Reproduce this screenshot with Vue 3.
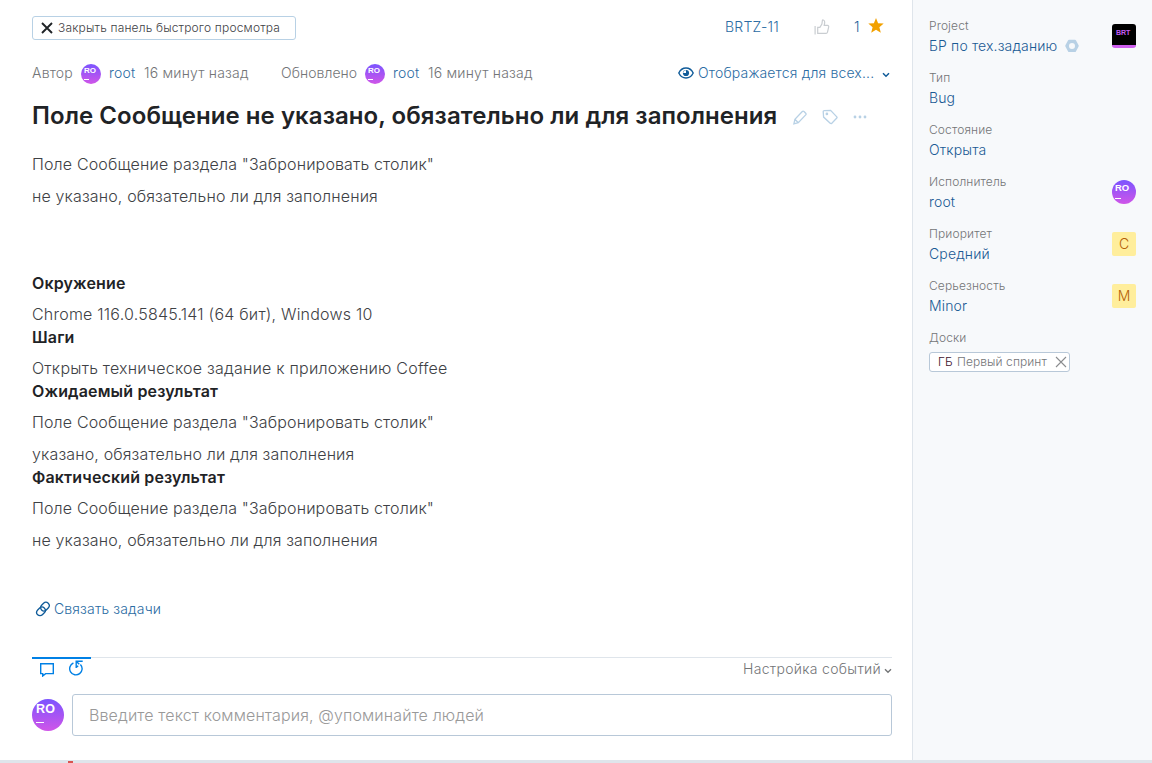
<script setup>
const sections = [
  { title: 'Окружение', wide: true, lines: ['Chrome 116.0.5845.141 (64 бит), Windows 10'] },
  { title: 'Шаги', wide: true, lines: ['Открыть техническое задание к приложению Coffee'] },
  { title: 'Ожидаемый результат', lines: ['Поле Сообщение раздела "Забронировать столик"', 'указано, обязательно ли для заполнения'] },
  { title: 'Фактический результат', lines: ['Поле Сообщение раздела "Забронировать столик"', 'не указано, обязательно ли для заполнения'] },
]
const fields = [
  { label: 'Project', value: 'БР по тех.заданию', kind: 'project' },
  { label: 'Тип', value: 'Bug' },
  { label: 'Состояние', value: 'Открыта' },
  { label: 'Исполнитель', value: 'root', kind: 'user' },
  { label: 'Приоритет', value: 'Средний', kind: 'tag', tag: 'C' },
  { label: 'Серьезность', value: 'Minor', kind: 'tag', tag: 'M' },
]
</script>

<template>
  <div class="page">
    <div class="sheet">
      <main class="main">
        <div class="toolbar">
          <button class="close">
            <svg width="12" height="12" viewBox="0 0 12 12"><path d="M1 1l10 10M11 1L1 11" stroke="#1f2326" stroke-width="1.9" fill="none" /></svg>
            <span>Закрыть панель быстрого просмотра</span>
          </button>
          <span class="issue-id">BRTZ-11</span>
          <svg class="thumb" width="16" height="16" viewBox="0 0 16 16" fill="none" stroke="#c9cdd1" stroke-width="1.2"><path d="M1.1 7v8.500M3.700 8.300h2.200l2-3.200.5-3.700q.2-.6.900-.4 1.700.5 1.400 2.600l-.5 2.700h3.300q1.400.2 1.200 1.500l-1.200 5.300q-.4 1.200-1.500 1.300H3.700z" /></svg>
          <span class="votes">1</span>
          <svg class="star" width="16" height="15" viewBox="0 0 16 15"><path d="M8 0l2.1 5.2 5.6.4-4.3 3.6 1.4 5.5L8 11.7l-4.8 3 1.4-5.5L.3 5.6l5.6-.4z" fill="#f2a100" /></svg>
        </div>

        <div class="meta">
          <span class="author">Автор</span>
          <span class="avatar a20"><b>RO</b><i></i></span>
          <span class="link user">root</span>
          <span class="ago">16 минут назад</span>
          <span class="updated">Обновлено</span>
          <span class="avatar a20"><b>RO</b><i></i></span>
          <span class="link user">root</span>
          <span class="ago">16 минут назад</span>
          <span class="visibility link">
            <svg width="16" height="12" viewBox="0 0 16 12"><path d="M.8 6C2.4 2.7 4.9 1 8 1s5.600 1.700 7.200 5C13.600 9.300 11.100 11 8 11S2.400 9.300.8 6z" fill="none" stroke="#0f5b99" stroke-width="1.400" /><circle cx="8" cy="6" r="3.100" fill="#0f5b99" /><path d="M8 3.200V6H5.200A2.900 2.900 0 0 1 8 3.200z" fill="#fff" /></svg>
            <span class="vis-text">Отображается для всех...</span>
            <svg class="chevron" width="8" height="6" viewBox="0 0 8 6"><path d="M1 1.200l3 3 3-3" stroke="#0f5b99" stroke-width="1.500" fill="none" /></svg>
          </span>
        </div>

        <div class="heading">
          <h1>Поле Сообщение не указано, обязательно ли для заполнения</h1>
          <svg class="pencil" width="14" height="15" viewBox="0 0 14 15" fill="none" stroke="#b8d1e5" stroke-width="1.300"><path d="M.9 13.900l1-4.600 7.400-7.800q.8-.8 1.700 0l1.700 1.700q.8.8 0 1.700l-7.400 7.800zM1.900 9.300l3.400 3.400" /></svg>
          <svg class="label-icon" width="16" height="16" viewBox="0 0 16 16" fill="none" stroke="#b8d1e5" stroke-width="1.300"><path d="M1.200 2.500q0-.9.900-.9L8.600 1.400l6.200 6.500q.5.600 0 1.100l-5.200 5.400q-.6.500-1.100 0L1.600 8.100z" /><circle cx="4.900" cy="4.900" r=".7" /></svg>
          <svg class="more" width="14" height="4" viewBox="0 0 14 4" fill="#b8d1e5"><circle cx="2" cy="2" r="1.400" /><circle cx="7" cy="2" r="1.400" /><circle cx="12" cy="2" r="1.400" /></svg>
        </div>

        <article class="body">
          <p>Поле Сообщение раздела "Забронировать столик"</p>
          <p>не указано, обязательно ли для заполнения</p>
          <div class="steps">
            <section v-for="s in sections" :key="s.title" :class="{ wide: s.wide }">
              <h2>{{ s.title }}</h2>
              <p v-for="l in s.lines" :key="l">{{ l }}</p>
            </section>
          </div>
        </article>

        <div class="relate link">
          <svg width="16" height="16" viewBox="0 0 16 16" fill="none" stroke="#0f5b99" stroke-width="1.300"><rect x="5.200" y="2.300" width="9.400" height="6.600" rx="3.300" transform="rotate(-45 9.900 5.600)" /><rect x="1.300" y="7.100" width="9.400" height="6.600" rx="3.300" transform="rotate(-45 6 10.400)" /></svg>
          <span>Связать задачи</span>
        </div>

        <div class="activity">
          <div class="tabs">
            <svg width="14" height="14" viewBox="0 0 14 14" fill="none" stroke="#0080e5" stroke-width="1.400"><path d="M.7.700h12.600v9.900H5.600L2.700 13v-2.400H.7z" /></svg>
            <svg width="14" height="16" viewBox="0 0 14 16" fill="none" stroke="#0080e5" stroke-width="1.400"><path d="M11.400 4.400A6.200 6.200 0 1 1 4.400 3M7.200 8V1.200h6.500M7.400 1.400l2.900 2.900M7.200 7.400l2-1.700" /></svg>
          </div>
          <div class="events">
            <span>Настройка событий</span>
            <svg class="chevron" width="8" height="6" viewBox="0 0 8 6"><path d="M1 1.200l3 3 3-3" stroke="#737577" stroke-width="1.400" fill="none" /></svg>
          </div>
        </div>

        <div class="comment">
          <span class="avatar a32"><b>RO</b><i></i></span>
          <div class="input">Введите текст комментария, @упоминайте людей</div>
        </div>
      </main>

      <aside class="side">
        <div v-for="f in fields" :key="f.label" class="field">
          <div>
            <div class="label">{{ f.label }}</div>
            <div class="value">
              <span>{{ f.value }}</span>
              <svg v-if="f.kind === 'project'" width="14" height="14" viewBox="0 0 14 14"><path fill-rule="evenodd" d="M4 .8h6q.6 0 .9.500l2.700 5q.3.600 0 1.200l-2.700 5q-.3.600-.9.600H4q-.6 0-.9-.6l-2.700-5q-.3-.6 0-1.200l2.700-5q.3-.5.9-.5zM7 4a3 3 0 1 0 0 6 3 3 0 0 0 0-6z" fill="#b8d1e5" /></svg>
            </div>
          </div>
          <span v-if="f.kind === 'project'" class="project-icon"><b>BRT</b></span>
          <span v-if="f.kind === 'user'" class="avatar a24"><b>RO</b><i></i></span>
          <span v-if="f.kind === 'tag'" class="color-tag">{{ f.tag }}</span>
        </div>
        <div class="label boards">Доски</div>
        <div class="board">
          <span class="code">ГБ</span>
          <span class="sprint">Первый спринт</span>
          <svg width="12" height="12" viewBox="0 0 12 12"><path d="M1 1l10 10M11 1L1 11" stroke="#8a8c8e" stroke-width="1.100" fill="none" /></svg>
        </div>
      </aside>
    </div>
    <div class="strip"><span class="mark"></span></div>
  </div>
</template>

<style>
body { margin: 0; overflow: hidden; }
</style>

<style scoped>
* { box-sizing: border-box; }
.page { width: 1152px; height: 763px; background: #fff; font: 14px/20px Inter, "Noto Sans", sans-serif; font-weight: 350; color: #737577; display: flex; flex-direction: column; }
.sheet { display: flex; height: 760px; }
svg { display: block; flex: none; }
span { white-space: nowrap; }
.main { width: 912px; padding: 16px 20px 0 32px; }
.link { color: #2b6ca3; }

.toolbar { display: flex; align-items: center; height: 24px; }
.close { display: flex; align-items: center; gap: 5px; width: 264px; height: 24px; padding: 0 8px; border: 1px solid #b8d1e5; border-radius: 3px; background: #fff; font: 12px/20px Inter, sans-serif; font-weight: 350; letter-spacing: .17px; color: #3e4145; }
.issue-id { margin-left: 429px; width: 89px; margin-top: -2px; color: #2b6ca3; letter-spacing: .25px; }
.thumb { margin-top: -3px; }
.votes { margin-left: 22px; width: 16px; margin-top: -2px; color: #1f5f99; padding-left: 2px; }
.star { margin-top: -5px; }

.meta { display: flex; align-items: center; height: 20px; margin-top: 23px; letter-spacing: .2px; }
.meta .avatar { margin: 2px 8px 0 8px; }
.author { width: 41px; }
.updated { width: 76px; letter-spacing: .05px; }
.user { width: 35px; }
.ago { width: 137px; }
.visibility { display: flex; align-items: center; margin-left: auto; margin-right: 2px; letter-spacing: .17px; }
.vis-text { width: 184px; margin-left: 4px; }
.chevron { margin-top: 3px; }

.heading { display: flex; align-items: center; height: 32px; margin-top: 17px; }
h1 { margin: 0; width: 761px; font-size: 24px; line-height: 32px; font-weight: 600; letter-spacing: .06px; color: #1f2326; white-space: nowrap; }
.pencil { margin-top: 3px; }
.label-icon { margin: 2px 0 0 15px; }
.more { margin: 2px 0 0 15px; }

.body { margin-top: 20px; color: #3e4145; font-size: 16px; letter-spacing: .14px; }
.body p { margin: 8px 0 0; line-height: 24px; }
.body > p:first-child { margin-top: 0; }
.wide p { letter-spacing: .22px; }
.steps { margin-top: 64px; }
h2 { margin: 0; font-size: 16px; line-height: 22px; font-weight: 600; letter-spacing: .15px; color: #1f2326; }

.relate { display: flex; align-items: center; gap: 3px; height: 20px; margin: 47px 0 0 3px; letter-spacing: .16px; }

.activity { display: flex; justify-content: space-between; border-top: 1px solid #dfe5eb; height: 24px; margin-top: 38px; }
.tabs { display: flex; gap: 15px; width: 59px; margin-top: -1px; border-top: 2px solid #0080e5; padding-left: 8px; }
.tabs svg:first-child { margin-top: 4px; }
.tabs svg:last-child { margin-top: 1px; }
.events { display: flex; align-items: center; gap: 3px; height: 22px; letter-spacing: .3px; }

.comment { display: flex; align-items: center; gap: 8px; margin-top: 13px; }
.input { flex: 1; height: 42px; border: 1px solid #b8c8d8; border-radius: 3px; padding: 0 16px; font-size: 16px; line-height: 40px; letter-spacing: .12px; color: #999; }

.avatar { flex: none; display: flex; flex-direction: column; border-radius: 50%; background: linear-gradient(#7b54ff, #d055e8); color: #fff; overflow: hidden; letter-spacing: 0; }
.avatar b { font-family: "Liberation Sans", Arial, sans-serif; font-weight: 700; }
.avatar i { background: #fff; height: 1px; }
.a20 { width: 20px; height: 20px; padding: 2px 0 0 3px; }
.a20 b { font-size: 8px; line-height: 10px; }
.a20 i { width: 5px; margin-top: 3px; }
.a24 { width: 24px; height: 24px; padding: 2px 0 0 3px; }
.a24 b { font-size: 9.500px; line-height: 12px; }
.a24 i { width: 6px; margin-top: 4px; }
.a32 { width: 32px; height: 32px; padding: 3px 0 0 4px; }
.a32 b { font-size: 12.500px; line-height: 15px; letter-spacing: .3px; }
.a32 i { width: 8px; margin-top: 5px; }

.side { width: 240px; background: #f7f9fb; border-left: 1px solid #dfe5eb; padding: 16px 16px 0; }
.field { display: flex; justify-content: space-between; align-items: center; height: 52px; padding-bottom: 12px; }
.label { font-size: 12px; line-height: 20px; letter-spacing: .12px; color: #737577; }
.value { display: flex; align-items: center; gap: 8px; line-height: 20px; letter-spacing: .14px; color: #1a5a94; }
.project-icon { width: 24px; height: 24px; border-radius: 3px; background: #000; border-bottom: 3px solid #cf5fef; padding: 3px 0 0 4px; font: 7px/11px "Liberation Sans", Arial, sans-serif; color: #c45cf5; }
.project-icon b { font-weight: 700; }
.color-tag { width: 24px; height: 24px; border-radius: 2px; background: #ffee9c; color: #b45f06; line-height: 24px; text-align: center; }
.board { display: flex; align-items: center; width: 141px; height: 20px; margin-top: 4px; padding: 0 2px 0 8px; border: 1px solid #b8c8d8; border-radius: 3px; background: #fff; font-size: 12px; letter-spacing: .08px; }
.code { color: #40102c; width: 19px; }
.sprint { flex: 1; }
.strip { height: 3px; background: #dfe5eb; display: flex; }
.mark { width: 5px; height: 2px; margin: 1px 0 0 68px; background: #d9534f; }
</style>
